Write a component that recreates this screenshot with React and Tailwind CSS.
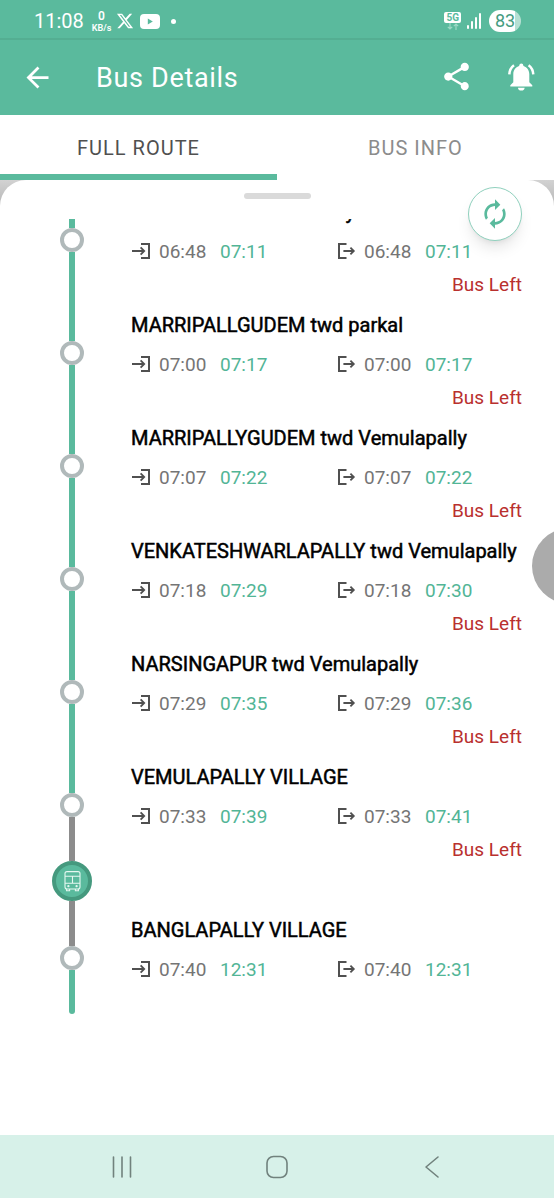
import { MdArrowBack, MdShare, MdAutorenew } from 'react-icons/md';
import { FaXTwitter } from 'react-icons/fa6';

// the first stop is scrolled almost out of the list
const STOPS = [
  { name: 'y', hidden: true, arrive: ['06:48', '07:11'], depart: ['06:48', '07:11'], left: true },
  { name: 'MARRIPALLGUDEM twd parkal', arrive: ['07:00', '07:17'], depart: ['07:00', '07:17'], left: true },
  { name: 'MARRIPALLYGUDEM twd Vemulapally', arrive: ['07:07', '07:22'], depart: ['07:07', '07:22'], left: true },
  { name: 'VENKATESHWARLAPALLY twd Vemulapally', arrive: ['07:18', '07:29'], depart: ['07:18', '07:30'], left: true },
  { name: 'NARSINGAPUR twd Vemulapally', arrive: ['07:29', '07:35'], depart: ['07:29', '07:36'], left: true },
  { name: 'VEMULAPALLY VILLAGE', arrive: ['07:33', '07:39'], depart: ['07:33', '07:41'], left: true, busAfter: true },
  { name: 'BANGLAPALLY VILLAGE', arrive: ['07:40', '12:31'], depart: ['07:40', '12:31'], busBefore: true, last: true },
];

function ArriveIcon() {
  return (
    <svg className="w-5 h-[18px]" viewBox="0 0 20 18" fill="none" stroke="#505050" strokeWidth="2">
      <path d="M10 2h8v14h-8" />
      <path d="M1 9h12M9.6 5.4 13.2 9l-3.6 3.6" strokeWidth="1.8" />
    </svg>
  );
}

function DepartIcon() {
  return (
    <svg className="w-5 h-[18px]" viewBox="0 0 20 18" fill="none" stroke="#505050" strokeWidth="2">
      <path d="M10.5 2H3v14h7.5" />
      <path d="M7.4 9h10.2M14.4 5.6 17.8 9l-3.4 3.4" strokeWidth="1.8" />
    </svg>
  );
}

function BellIcon() {
  return (
    <svg className="size-8" viewBox="0 0 32 32" fill="currentColor">
      <circle cx="16.3" cy="4.6" r="2" />
      <path d="M16.3 4.4c-4.8.5-8 4-8 8.8v8l-3 3v1.2h22v-1.2l-3-3v-8c0-4.8-3.2-8.3-8-8.8z" />
      <path d="M13 26.8h6.6a3.3 2.8 0 0 1-6.6 0z" />
      <path d="M4.3 13.4C4.5 9.6 6 6.4 9 4.2M28.3 13.4c-.2-3.8-1.7-7-4.7-9.2" fill="none" stroke="currentColor" strokeWidth="2.5" />
    </svg>
  );
}

function BusMarker() {
  return (
    <div className="flex items-center justify-center size-10 rounded-full border-4 border-[#45997e] bg-[#5aba9d]">
      <svg className="w-5 h-6" viewBox="0 0 20 24" fill="none" stroke="#e6f7f1" strokeWidth="1.1">
        <rect x="3" y="2.6" width="15" height="17.4" rx="2" />
        <path d="M3 7.2h15M3 14.2h15M10.5 7.2v7" />
        <path d="M4.6 20v1.8h3V20M13.4 20v1.8h3V20" />
        <circle cx="6.4" cy="17.2" r=".6" />
        <circle cx="14.6" cy="17.2" r=".6" />
      </svg>
    </div>
  );
}

function Times({ icon, planned, actual }) {
  return (
    <div className="flex items-center text-[19px] leading-7">
      <span className="pb-[2px]">{icon}</span>
      <span className="ml-2 w-[61px] text-[#757575]">{planned}</span>
      <span className="text-[#52b596]">{actual}</span>
    </div>
  );
}

function Stop({ stop }) {
  return (
    <li className="flex gap-[39px]">
      <div className="flex flex-col items-center w-10">
        <div className={`w-[6px] h-[30px] ${stop.busBefore ? 'bg-[#8c8c8c]' : 'bg-[#5aba9d]'}`} />
        <div className="size-6 rounded-full border-4 border-[#b0b9ba] bg-white" />
        {stop.busAfter && (
          <>
            <div className="w-[6px] h-11 bg-[#8c8c8c]" />
            <BusMarker />
            <div className="w-[6px] h-[15px] bg-[#8c8c8c]" />
          </>
        )}
        {stop.last && <div className="w-[6px] h-11 rounded-b-full bg-[#5aba9d]" />}
        {!stop.busAfter && !stop.last && <div className="w-[6px] grow bg-[#5aba9d]" />}
      </div>

      <div className="flex-1 pb-3">
        <h2 className={`text-xl leading-7 text-black [-webkit-text-stroke:0.5px_black] ${stop.hidden ? 'w-[224px] text-right' : ''}`}>
          {stop.name}
        </h2>
        <div className="flex mt-3">
          <div className="w-[205px]">
            <Times icon={<ArriveIcon />} planned={stop.arrive[0]} actual={stop.arrive[1]} />
          </div>
          <Times icon={<DepartIcon />} planned={stop.depart[0]} actual={stop.depart[1]} />
        </div>
        {stop.left && <p className="mt-[5px] text-[19px] leading-7 text-right text-[#b9302e]">Bus Left</p>}
      </div>
    </li>
  );
}

function StatusBar() {
  return (
    <div className="flex items-center h-10 pl-[34px] pr-[33px] pt-1 text-white border-b-2 border-[#54ae92]">
      <span className="text-xl leading-6">11:08</span>
      <div className="flex flex-col items-center ml-2 font-semibold">
        <span className="text-xs leading-[14px]">0</span>
        <span className="text-[9px] leading-[10px]">KB/s</span>
      </div>
      <FaXTwitter className="ml-[5px] size-[18px]" />
      <svg className="ml-[6px] w-5 h-[15px]" viewBox="0 0 20 15">
        <rect width="20" height="15" rx="4" fill="#fff" />
        <path d="M7.8 4.6v5.8l5-2.9z" fill="#5aba9d" />
      </svg>
      <span className="ml-[11px] size-[5px] rounded-full bg-white" />

      <div className="flex flex-col items-center ml-auto">
        <span className="px-[2px] rounded-[2px] bg-white text-[10px] leading-[11px] font-bold text-[#5aba9d]">5G</span>
        <svg className="w-3 h-[7px]" viewBox="0 0 12 7" fill="none" stroke="#9cd9c6" strokeWidth="1.2">
          <path d="M3 0v6M.8 3.8 3 6l2.2-2.2M9 7V1M6.8 3.2 9 1l2.2 2.2" />
        </svg>
      </div>
      <svg className="ml-[6px] w-[15px] h-4" viewBox="0 0 15 16" fill="#fff">
        <rect x="0" y="12" width="2" height="4" rx="1" />
        <rect x="4" y="8" width="2" height="8" rx="1" />
        <rect x="8" y="4" width="2" height="12" rx="1" />
        <rect x="12" y="0" width="2" height="16" rx="1" />
      </svg>
      <span className="ml-[7px] w-8 rounded-full bg-linear-to-r from-white from-80% to-[#b5e0d3] to-80% text-center text-lg leading-[22px] text-[#459c80]">83</span>
    </div>
  );
}

export default function App() {
  return (
    <div className="relative flex flex-col min-h-screen overflow-hidden bg-white pb-[2px] font-[Roboto,sans-serif]">
      <header className="bg-[#5aba9d]">
        <StatusBar />
        <div className="flex items-center h-[75px] pl-[21px] pr-[17px] text-white">
          <button type="button" aria-label="Back"><MdArrowBack className="size-[33px]" /></button>
          <h1 className="ml-[42px] text-[27px] leading-8 tracking-wide">Bus Details</h1>
          <button type="button" aria-label="Share" className="ml-auto pb-[2px]"><MdShare className="size-[33px]" /></button>
          <button type="button" aria-label="Notifications" className="ml-8 pb-[2px]"><BellIcon /></button>
        </div>
      </header>

      <nav className="flex text-xl tracking-wider">
        <button type="button" className="flex-1 h-[65px] pt-[6px] border-b-[6px] border-[#5aba9d] text-[#505050]">FULL ROUTE</button>
        <button type="button" className="flex-1 h-[65px] pt-[6px] border-b-[6px] border-white text-[#8c8c8c]">BUS INFO</button>
      </nav>

      <div className="flex flex-col grow bg-linear-to-b from-[#d2d2d2] to-[#b4b4b4] to-3%">
        <main className="relative grow rounded-t-[26px] bg-white pt-[13px]">
          <div className="mx-auto w-[67px] h-[6px] rounded-full bg-[#dadada]" />
          <button
            type="button"
            aria-label="Refresh"
            className="absolute top-[7px] right-8 flex items-center justify-center size-[54px] rounded-full border border-[#8fd0bd] bg-white text-[#5aba9d] shadow-lg"
          >
            <MdAutorenew className="size-8" />
          </button>
          <div className="mt-5 overflow-hidden">
            <ul className="-mt-[21px] pl-[52px] pr-8">
              {STOPS.map((stop, i) => <Stop key={i} stop={stop} />)}
            </ul>
          </div>
        </main>
      </div>

      <div className="absolute top-[528px] -right-[54px] size-[76px] rounded-full bg-[#ababab]" />

      <footer className="flex items-center justify-center gap-[131px] h-[63px] bg-[#d7f1e9] text-[#71827d]">
        <button type="button" aria-label="Recents">
          <svg className="size-6" viewBox="0 0 24 24" fill="none" stroke="currentColor" strokeWidth="1.6" strokeLinecap="round">
            <path d="M3.5 2v20M12 2v20M20.5 2v20" />
          </svg>
        </button>
        <button type="button" aria-label="Home">
          <svg className="size-6" viewBox="0 0 24 24" fill="none" stroke="currentColor" strokeWidth="1.6">
            <rect x="2" y="1.5" width="20" height="21" rx="6.5" />
          </svg>
        </button>
        <button type="button" aria-label="Back to previous app">
          <svg className="size-6" viewBox="0 0 24 24" fill="none" stroke="currentColor" strokeWidth="1.6" strokeLinecap="round" strokeLinejoin="round">
            <path d="M18 2 6 12l12 10" />
          </svg>
        </button>
      </footer>
    </div>
  );
}
